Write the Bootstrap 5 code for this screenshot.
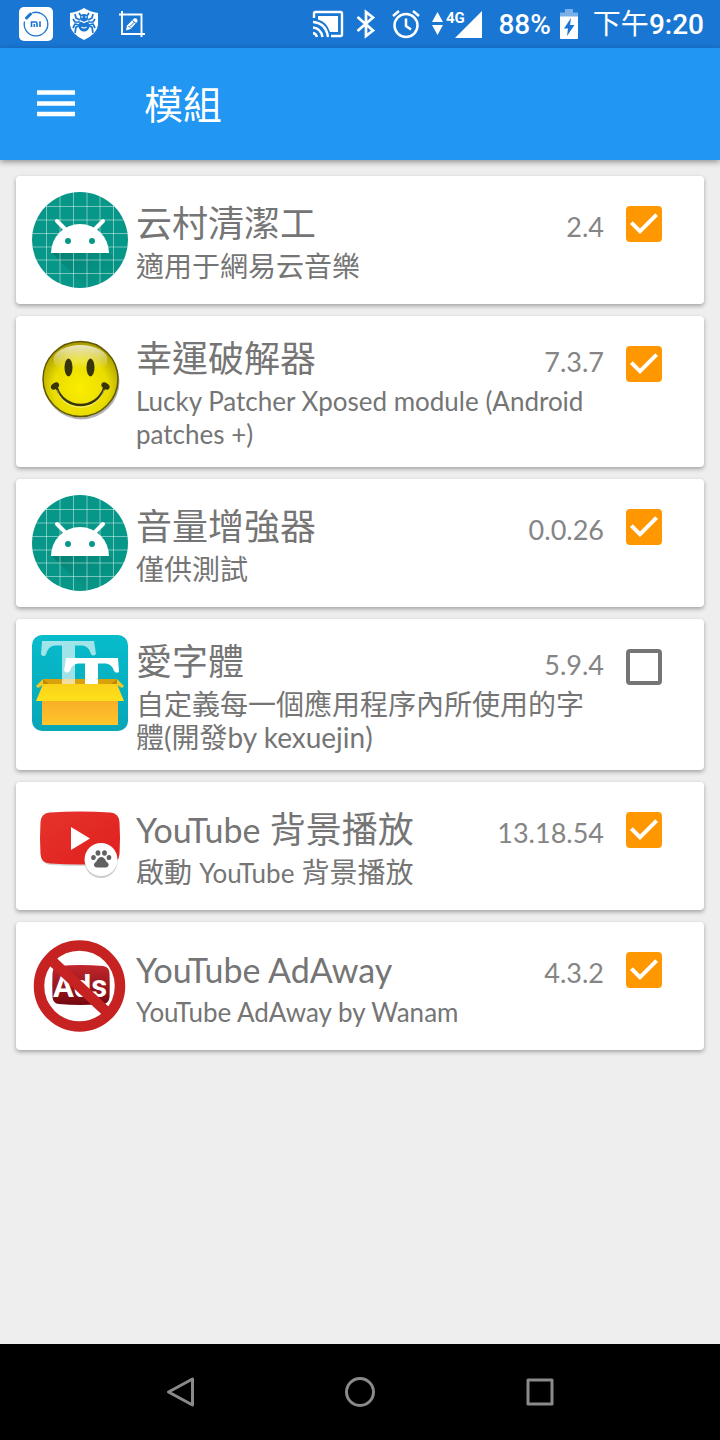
<!DOCTYPE html>
<html lang="zh-Hant">
<head>
<meta charset="utf-8">
<meta name="viewport" content="width=device-width, initial-scale=1">
<title>模組</title>
<link rel="stylesheet" href="https://cdn.jsdelivr.net/npm/bootstrap@5.3.0/dist/css/bootstrap.min.css">
<style>
  body { background: #eee; color: #757575; font-family: Lato, "Noto Sans CJK TC", sans-serif; }
  svg { display: block; flex: none; }
  .status-bar { height: 48px; background: #1976d2; font: 500 28px/46px Roboto, "Noto Sans CJK TC", sans-serif; padding: 0 16px 0 18px; }
  .status-bar .status-text { padding-top: 2px; }
  .status-group { gap: 12px; }
  .battery { gap: 9px; }
  .app-bar { height: 112px; background: #2196f3; box-shadow: 0 2px 6px rgba(0,0,0,.4); padding: 0 32px; gap: 64px; }
  .app-bar .menu-btn { width: 48px; height: 48px; border: 0; }
  .app-bar h1 { font-size: 39px; line-height: 48px; }
  .module-list { padding: 16px; gap: 12px; }
  .module { border-radius: 4px; border: 0; padding: 16px; min-height: 128px; box-shadow: 0 2px 4px rgba(0,0,0,.32); }
  .module-body { padding: 0 22px 0 8px; min-width: 0; }
  .module-name { font-size: 36px; line-height: 53px; }
  .module-version { font-size: 27px; line-height: 33px; color: #858585; }
  .module-info { font-size: 28px; line-height: 33px; }
  .module-name .latin { font-size: 34px; line-height: 33px; }
  .module-info .latin { font-size: 26px; line-height: 26px; }
  .module-info.latin { font-size: 26px; }
  .module .form-check-input { width: 36px; height: 36px; margin: 14px 26px 0 0; border: 4px solid #757575; border-radius: 4px; flex: none; float: none; }
  .module .form-check-input:checked { border: 0; background-color: #ff9800; background-size: 36px 36px;
    background-image: url("data:image/svg+xml,%3csvg xmlns='http://www.w3.org/2000/svg' viewBox='3 3 18 18'%3e%3cpath fill='%23fff' d='M10 17l-5-5 1.4-1.4 3.6 3.6 7.6-7.6L19 8z'/%3e%3c/svg%3e"); }
  .system-nav { height: 96px; background: #000; gap: 132px; }
  .system-nav .btn { width: 48px; height: 48px; border: 0; }
</style>
</head>
<body class="d-flex flex-column min-vh-100">

<svg width="0" height="0" class="position-absolute" aria-hidden="true">
  <defs>
    <linearGradient id="headShade" x1="0" y1="0" x2="1" y2="1">
      <stop offset="0" stop-color="#00695c" stop-opacity=".55"/><stop offset="1" stop-color="#009688" stop-opacity="0"/>
    </linearGradient>
    <clipPath id="disc"><circle cx="48" cy="48" r="48"/></clipPath>
    <symbol id="android" viewBox="0 0 96 96">
      <g clip-path="url(#disc)">
        <rect width="96" height="96" fill="#079788"/>
        <path d="M19 60L77 60 96 79V96H55z" fill="url(#headShade)"/>
        <path d="M14.500 0V96M28 0V96M41.500 0V96M55 0V96M68 0V96M81.500 0V96M0 14.500H96M0 28H96M0 41.500H96M0 55H96M0 68H96M0 81.500H96" stroke="#fff" stroke-opacity=".45" fill="none"/>
      </g>
      <path d="M19 61A29 29 0 0 1 77 61z" fill="#fff"/>
      <path d="M25 29l9 9M71 29l-9 9" stroke="#fff" stroke-width="4" stroke-linecap="round"/>
      <circle cx="36" cy="49" r="3" fill="#079788"/><circle cx="60" cy="49" r="3" fill="#079788"/>
    </symbol>
  </defs>
</svg>

<div class="status-bar d-flex align-items-center justify-content-between text-white">
  <div class="status-group d-flex align-items-center">
    <svg width="36" height="36" viewBox="0 0 36 36">
      <rect x="1" y="1" width="34" height="34" rx="5" fill="#fff"/>
      <path d="M14 7A11.800 11.800 0 1 1 6.500 15.500" fill="none" stroke="#1976d2" stroke-width="1.300"/>
      <path d="M8.500 12l4-4" stroke="#1976d2" stroke-width="3" stroke-linecap="round"/>
      <path d="M13.500 21v-5h4q1.500 0 1.500 1.500V21M16.300 18v3M22 15.300V21" fill="none" stroke="#1976d2" stroke-width="1.600"/>
    </svg>
    <svg width="36" height="36" viewBox="0 0 36 36">
      <path d="M18 2q6 4 14 5v12q-1 9-14 15Q5 28 4 19V7q8-1 14-5z" fill="#fff"/>
      <g fill="none" stroke="#1976d2" stroke-width="1.700" stroke-linejoin="round">
        <path d="M14 14l-4-2-1-4M14 16l-5 0-2-3M14 20l-4 1-1 6M22 14l4-2 1-4M22 16l5 0 2-3M22 20l4 1 1 6M15 10l-2-3M21 10l2-3M13 19l-4-1-2 4M23 19l4-1 2 4"/>
      </g>
      <circle cx="18" cy="12" r="4" fill="#1976d2"/><circle cx="18" cy="20" r="5.500" fill="#1976d2"/>
      <path d="M15 11h2M19 11h2M15 15l3 1.500 3-1.500M15.500 21q2.500 2 5 0" stroke="#fff" stroke-width="1.200" fill="none"/>
    </svg>
    <svg width="36" height="36" viewBox="0 0 36 36" fill="none" stroke="#fff" stroke-width="1.900">
      <path d="M5 8.500H27.500V31M8 5V28H31"/>
      <path d="M12 24.500l1-5 7-7q3.500-1 3.500 3l-7 7.500z" fill="#fff" stroke="none"/>
      <path d="M14.500 20l2 2M18.500 14.500l3.500 3M16 20.500l4.500-4.500" stroke="#1976d2" stroke-width="1"/>
    </svg>
  </div>
  <div class="status-group d-flex align-items-center">
    <svg width="32" height="28" viewBox="0 0 32 28" fill="none" stroke="#fff" stroke-width="2.400">
      <path d="M2 8V3.500Q2 2 3.500 2H28.500Q30 2 30 3.500V24.500Q30 26 28.500 26H19"/>
      <path d="M6 6H26V22H18Q15 12 6 9.500z" fill="#fff" stroke="none"/>
      <path d="M1 23q3 .5 4 4M1 17.500q8 1 9.500 9.500M1 12q13 1 15 15"/>
    </svg>
    <svg width="24" height="30" viewBox="0 0 24 30" fill="none" stroke="#fff" stroke-width="2.700"><path d="M1.500 8L17 21.500 10 27V3l7 5.500L1.500 22"/></svg>
    <svg width="28" height="30" viewBox="0 0 28 30" fill="none" stroke="#fff" stroke-width="2.500">
      <circle cx="14" cy="16.500" r="11.500"/><path d="M14 9.500V17l5 3.500M1 7l6-5M27 7l-6-5"/>
    </svg>
    <svg width="54" height="30" viewBox="0 0 54 30" fill="#fff">
      <path d="M0 13L5.500 3 11 13zM0 16H11L5.500 26zM50 2V29H23z"/>
      <text x="14" y="14" font-size="15" font-weight="700">4G</text>
    </svg>
    <div class="battery d-flex align-items-center">
      <span class="status-text">88%</span>
      <svg width="21" height="30" viewBox="0 0 21 30">
        <path d="M5 0h8v3.500h5V8H0V3.500h5z" fill="#78afe7"/><path d="M0 7.500h18V29q0 1-1 1H1q-1 0-1-1z" fill="#fff"/>
        <path d="M11 9L4 19.500h4L7 27l7.500-11H10z" fill="#1976d2"/>
      </svg>
    </div>
    <span class="status-text"><span class="fw-normal">下午</span>9:20</span>
  </div>
</div>

<header class="app-bar d-flex align-items-center text-white">
  <button type="button" class="menu-btn btn p-0" aria-label="選單">
    <svg width="48" height="48" viewBox="0 0 48 48"><path d="M5 12.500H43M5 23.500H43M5 34H43" stroke="#fff" stroke-width="4.500"/></svg>
  </button>
  <h1 class="m-0 fw-normal">模組</h1>
</header>

<main class="module-list flex-grow-1 d-flex flex-column">
  <article class="module card flex-row">
    <svg width="96" height="96"><use href="#android"/></svg>
    <div class="module-body flex-grow-1 align-self-center">
      <div class="d-flex justify-content-between align-items-baseline">
        <label class="module-name" for="m1">云村清潔工</label><span class="module-version">2.4</span>
      </div>
      <p class="module-info m-0">適用于網易云音樂</p>
    </div>
    <input class="form-check-input" type="checkbox" id="m1" checked>
  </article>

  <article class="module card flex-row">
    <svg width="96" height="96" viewBox="0 0 96 96">
      <defs>
        <radialGradient id="face" cx=".5" cy=".62" r=".62"><stop offset="0" stop-color="#fbee00"/><stop offset=".6" stop-color="#e9dc00"/><stop offset="1" stop-color="#a39500"/></radialGradient>
        <linearGradient id="gloss" x1="0" y1="0" x2="0" y2="1"><stop offset="0" stop-color="#fff" stop-opacity=".75"/><stop offset=".8" stop-color="#fff" stop-opacity="0"/></linearGradient>
      </defs>
      <circle cx="49.500" cy="49.500" r="38" fill="#000" opacity=".3"/>
      <circle cx="48.500" cy="47" r="37.500" fill="url(#face)" stroke="#5f5800" stroke-width="1.500"/>
      <ellipse cx="48.500" cy="28" rx="27" ry="15" fill="url(#gloss)"/>
      <ellipse cx="36.500" cy="35.500" rx="4" ry="9" fill="#38350a"/><ellipse cx="58.500" cy="35.500" rx="4" ry="9" fill="#38350a"/>
      <path d="M24.500 55C32 79 65 79 72.500 55" fill="none" stroke="#38350a" stroke-width="2.500"/>
      <path d="M25 58C33 81 64 81 72 58" fill="none" stroke="#fff" stroke-opacity=".5"/>
      <ellipse cx="23" cy="54" rx="4.500" ry="3" fill="#38350a" transform="rotate(-35 23 54)"/><ellipse cx="73.500" cy="54" rx="4.500" ry="3" fill="#38350a" transform="rotate(35 73.500 54)"/>
    </svg>
    <div class="module-body flex-grow-1 align-self-center">
      <div class="d-flex justify-content-between align-items-baseline">
        <label class="module-name" for="m2">幸運破解器</label><span class="module-version">7.3.7</span>
      </div>
      <p class="module-info latin m-0">Lucky Patcher Xposed module (Android patches +)</p>
    </div>
    <input class="form-check-input" type="checkbox" id="m2" checked>
  </article>

  <article class="module card flex-row">
    <svg width="96" height="96"><use href="#android"/></svg>
    <div class="module-body flex-grow-1 align-self-center">
      <div class="d-flex justify-content-between align-items-baseline">
        <label class="module-name" for="m3">音量增強器</label><span class="module-version">0.0.26</span>
      </div>
      <p class="module-info m-0">僅供測試</p>
    </div>
    <input class="form-check-input" type="checkbox" id="m3" checked>
  </article>

  <article class="module card flex-row">
    <svg width="96" height="96" viewBox="0 0 96 96">
      <defs>
        <linearGradient id="teal" x1="0" y1="0" x2="0" y2="1"><stop offset="0" stop-color="#07bccb"/><stop offset="1" stop-color="#08a5b8"/></linearGradient>
        <linearGradient id="boxFront" x1="0" y1="0" x2="0" y2="1"><stop offset="0" stop-color="#f8ae27"/><stop offset="1" stop-color="#ffc52c"/></linearGradient>
        <linearGradient id="flap" x1="0" y1="0" x2="0" y2="1"><stop offset="0" stop-color="#f9d21a"/><stop offset="1" stop-color="#ffe01b"/></linearGradient>
      </defs>
      <rect width="96" height="96" rx="10" fill="url(#teal)"/>
      <path d="M11 44H85V54H11z" fill="#d9a20c"/>
      <path d="M11 44l6 5H11zM85 44l-6 5h6z" fill="#bf8608"/>
      <path d="M10 6H62L64 19q-3 3-5 0-2-8-9-8.500H43V49H30V10.500H23q-7 .5-9 9-2 3-5 0z" fill="#fff" opacity=".62"/>
      <path d="M34 23H86L87 37q-3 2-5-1-2-7-8-7.500H66V49H53V28.500H46q-6 .5-8 7.500-3 3-6 0z" fill="#fff"/>
      <path d="M11 44L4 51l2 2 5-3zM85 44l7 7-2 2-5-3z" fill="#f4c81c"/>
      <path d="M10 64H86V90H10z" fill="url(#boxFront)"/>
      <path d="M11 49H85L92 66H4z" fill="url(#flap)"/>
    </svg>
    <div class="module-body flex-grow-1 align-self-center">
      <div class="d-flex justify-content-between align-items-baseline">
        <label class="module-name" for="m4">愛字體</label><span class="module-version">5.9.4</span>
      </div>
      <p class="module-info m-0">自定義每一個應用程序內所使用的字體(開發by kexuejin)</p>
    </div>
    <input class="form-check-input" type="checkbox" id="m4">
  </article>

  <article class="module card flex-row">
    <svg width="96" height="96" viewBox="0 16 96 96">
      <defs><linearGradient id="red" x1="0" y1="0" x2="1" y2="1"><stop offset="0" stop-color="#e6332c"/><stop offset="1" stop-color="#e0201e"/></linearGradient></defs>
      <path d="M18 32Q48 28 78 32 87 33 87 41 88 57 87 73 87 82 78 83 48 85 18 83 9 82 9 73 8 57 9 41 9 33 18 32z" fill="#000" opacity=".16"/>
      <path d="M18 30.500Q48 28.500 78 30.500 87 31 87.500 40 88.500 56 87.500 72 87 81 78 81.500 48 83.500 18 81.500 9 81 8.500 72 7.500 56 8.500 40 9 31 18 30.500z" fill="url(#red)"/>
      <path d="M39 45L58 56.500 39 68z" fill="#fff"/>
      <circle cx="69" cy="79.500" r="16.500" fill="#000" opacity=".2"/><circle cx="69" cy="77.500" r="16.500" fill="#fff"/>
      <g fill="#616161"><ellipse cx="61.500" cy="75.500" rx="2.300" ry="2.600"/><ellipse cx="66" cy="71" rx="2.400" ry="2.800"/><ellipse cx="72.500" cy="71" rx="2.400" ry="2.800"/><ellipse cx="77" cy="75.500" rx="2.300" ry="2.600"/>
      <path d="M69.300 75q3 0 5 4.500 2.500 1.500 2.500 3.500-1 3-4 2.500h-7q-3 .5-4-2.500 0-2 2.500-3.500 2-4.500 5-4.500z"/></g>
    </svg>
    <div class="module-body flex-grow-1 align-self-center">
      <div class="d-flex justify-content-between align-items-baseline">
        <label class="module-name" for="m5"><span class="latin">YouTube</span> 背景播放</label><span class="module-version">13.18.54</span>
      </div>
      <p class="module-info m-0">啟動 <span class="latin">YouTube</span> 背景播放</p>
    </div>
    <input class="form-check-input" type="checkbox" id="m5" checked>
  </article>

  <article class="module card flex-row">
    <svg width="96" height="96" viewBox="0 0 96 96">
      <defs><linearGradient id="tag" x1="0" y1="0" x2="0" y2="1"><stop offset="0" stop-color="#c2272d"/><stop offset="1" stop-color="#74080f"/></linearGradient></defs>
      <path d="M27 28Q48 26 71 28 77 28.500 77.500 35 78 47 77.500 59 77 65.500 71 66 48 68 27 66 21 65.500 20.500 59 20 47 20.500 35 21 28.500 27 28z" fill="url(#tag)"/>
      <text x="21" y="59" font-family="Roboto, sans-serif" font-size="31" font-weight="700" fill="#fff">Ads</text>
      <circle cx="47.500" cy="48" r="40.500" fill="none" stroke="#c62222" stroke-width="10.500"/>
      <path d="M18 21L78 77" stroke="#c62222" stroke-width="10.500"/>
    </svg>
    <div class="module-body flex-grow-1 align-self-center">
      <div class="d-flex justify-content-between align-items-baseline">
        <label class="module-name" for="m6"><span class="latin">YouTube AdAway</span></label><span class="module-version">4.3.2</span>
      </div>
      <p class="module-info latin m-0">YouTube AdAway by Wanam</p>
    </div>
    <input class="form-check-input" type="checkbox" id="m6" checked>
  </article>
</main>

<nav class="system-nav d-flex align-items-center justify-content-center" aria-label="系統導覽">
  <button type="button" class="btn p-0" aria-label="返回"><svg width="48" height="48" viewBox="0 0 48 48" fill="none" stroke="#8a8a8a" stroke-width="3" stroke-linejoin="round"><path d="M36.500 11V37L12.500 24z"/></svg></button>
  <button type="button" class="btn p-0" aria-label="主畫面"><svg width="48" height="48" viewBox="0 0 48 48" fill="none" stroke="#8a8a8a" stroke-width="3"><circle cx="24" cy="24" r="13.500"/></svg></button>
  <button type="button" class="btn p-0" aria-label="最近使用"><svg width="48" height="48" viewBox="0 0 48 48" fill="none" stroke="#8a8a8a" stroke-width="3" stroke-linejoin="round"><rect x="12" y="12" width="24" height="24"/></svg></button>
</nav>

<script src="https://cdn.jsdelivr.net/npm/bootstrap@5.3.0/dist/js/bootstrap.bundle.min.js"></script>
</body>
</html>
